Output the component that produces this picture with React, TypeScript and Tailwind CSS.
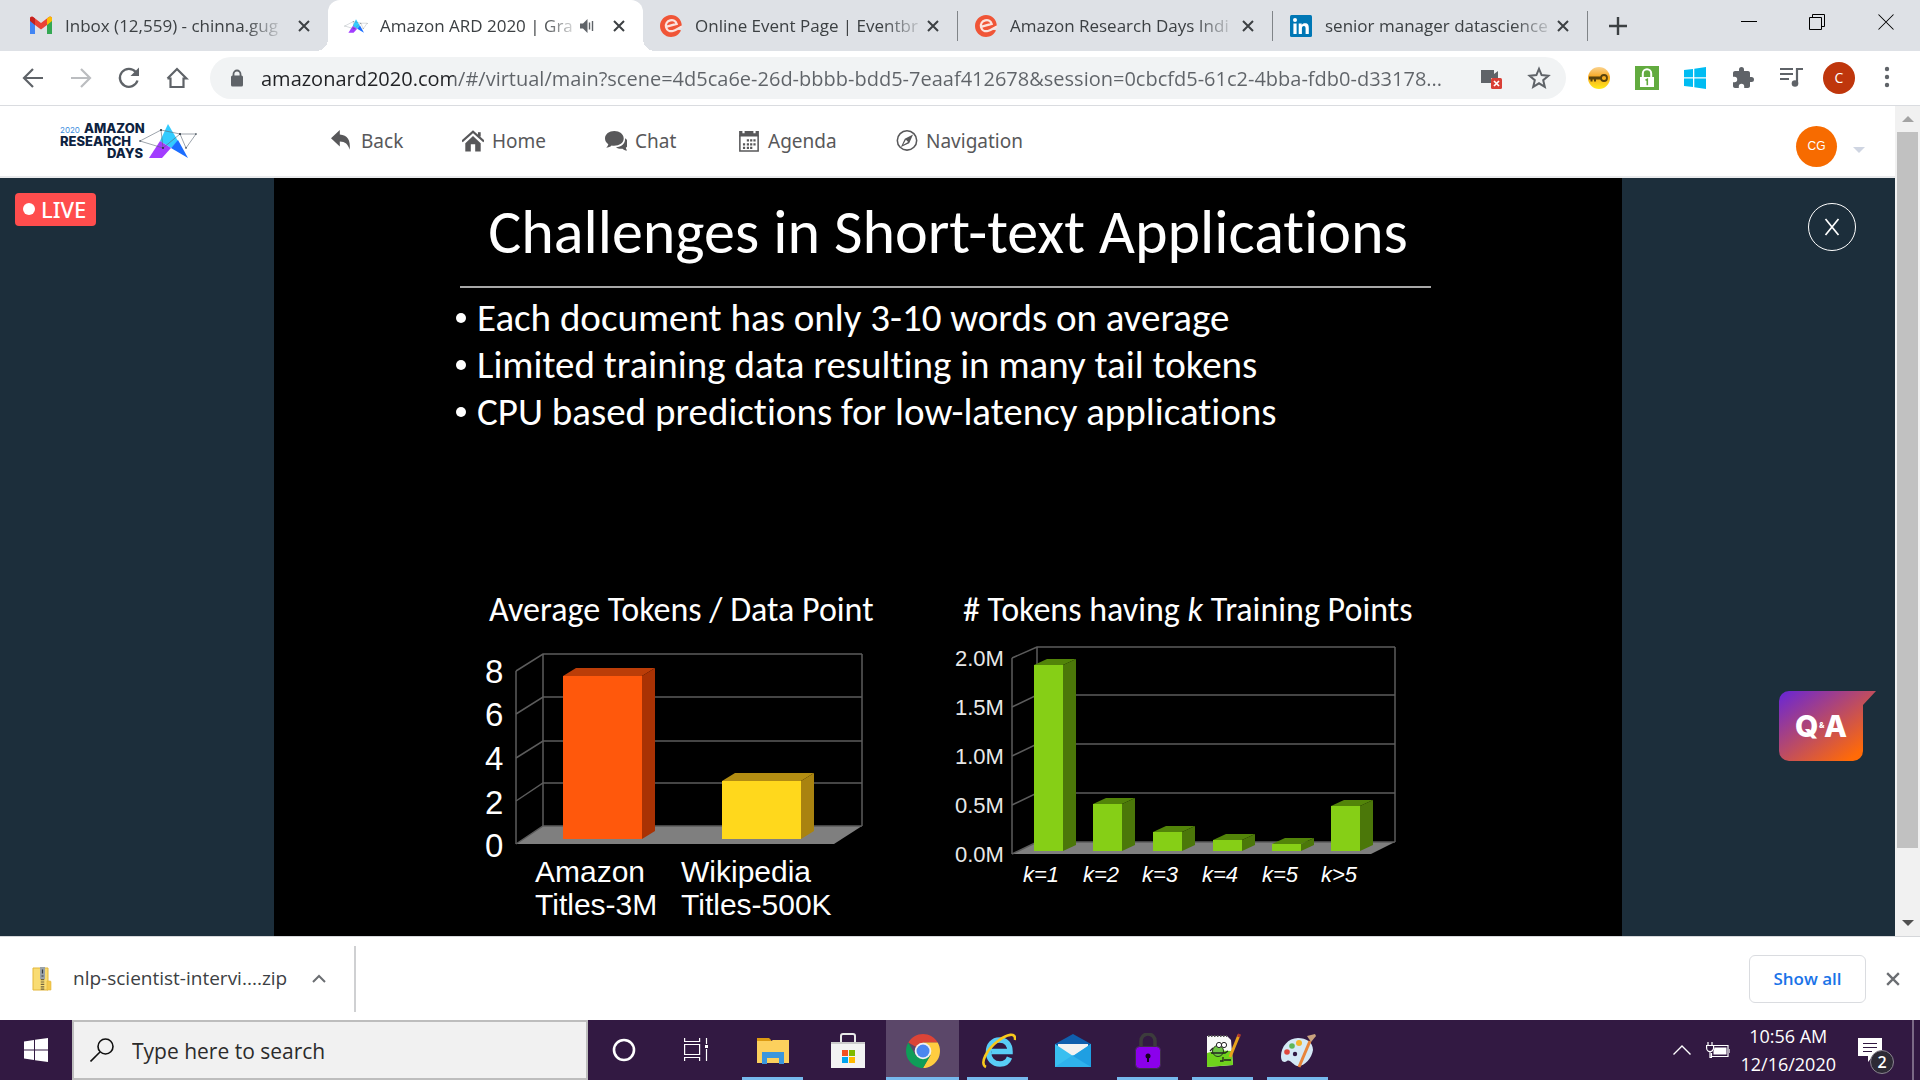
import React from "react";
import type { ReactNode } from "react";

const UI = "font-['Open_Sans','Noto_Sans',sans-serif]";

type TabInfo = {
  title: string;
  icon: ReactNode;
  active?: boolean;
  audible?: boolean;
  divider?: boolean;
};

function GmailIcon() {
  return (
    <svg viewBox="0 0 24 20" className="h-5 w-6">
      <path d="M1 3v15h5V8z" fill="#4285f4" />
      <path d="M23 3v15h-5V8z" fill="#34a853" />
      <path d="M1 4V2.5C1 .6 3 0 4.500 1.200L12 7l7.500-5.800C21 0 23 .6 23 2.500V4l-5 5-6 4.500L6 9z" fill="#ea4335" />
      <path d="M18 2.400 19.500 1.200C21 0 23 .6 23 2.500V5l-5 4z" fill="#fbbc04" />
      <path d="M1 5V2.500C1 .9 2.700.2 4 .9L6 2.400V9z" fill="#c5221f" />
    </svg>
  );
}

function LogoMark() {
  return (
    <g>
      <path d="M168 124 178 141 171 148 160 141Z" fill="#33ccff" />
      <path d="M160 141 149 158H162L171 148Z" fill="#a23cff" />
      <path d="M178 140 188 158 171 148Z" fill="#1a6dff" />
      <path
        d="M140 141 161 130 180 134 196 134 186 148 180 134 163 148ZM161 130 163 148"
        fill="none"
        stroke="#5b6673"
        strokeWidth="0.6"
      />
      <g fill="#26323e">
        <circle cx="161" cy="130" r="1" />
        <circle cx="180" cy="134" r="1" />
        <circle cx="163" cy="148" r="1" />
        <circle cx="196" cy="134" r="0.8" />
        <circle cx="140" cy="141" r="0.8" />
        <circle cx="186" cy="148" r="0.8" />
      </g>
    </g>
  );
}

function EventbriteIcon() {
  return (
    <svg viewBox="0 0 24 24" className="h-6 w-6">
      <path d="M12 1c6 0 10.500 4.500 10.800 10.500L17 15.500l5 .8C20.300 20.600 16.500 23 12 23 5.900 23 1 18 1 12S5.900 1 12 1z" fill="#f05537" />
      <path d="M6.800 12.800 17.600 9.900C16.800 7 14.100 5.600 11.200 6.400 8.200 7.200 6.300 10 7.100 13.200c.8 3 3.600 4.600 6.700 3.800 3-.8 5-2.500 9.200-4.500" fill="none" stroke="#fbe3de" strokeWidth="2.300" />
    </svg>
  );
}

function LinkedinIcon() {
  return (
    <svg viewBox="0 0 22 22" className="h-[22px] w-[22px]">
      <rect width="22" height="22" rx="1.500" fill="#0077b5" />
      <circle cx="5" cy="5" r="2" fill="#fff" />
      <path d="M3.400 8.500h3.200V19H3.400zM8.700 8.500h3v1.400c.6-1 1.800-1.700 3.300-1.700 3.100 0 3.800 2 3.800 4.800v6h-3.200v-5.300c0-1.500-.3-2.700-1.700-2.700-1.500 0-2 1.100-2 2.600V19H8.700z" fill="#fff" />
    </svg>
  );
}

function Cross({ className }: { className: string }) {
  return (
    <svg viewBox="0 0 12 12" className={className} fill="none" stroke="currentColor">
      <path d="M1 1 11 11M11 1 1 11" />
    </svg>
  );
}

const tabs: TabInfo[] = [
  { title: "Inbox (12,559) - chinna.gug", icon: <GmailIcon /> },
  {
    title: "Amazon ARD 2020 | Gra",
    icon: (
      <svg viewBox="138 122 60 38" className="h-6 w-6 overflow-visible">
        <LogoMark />
      </svg>
    ),
    active: true,
    audible: true,
  },
  { title: "Online Event Page | Eventbr", icon: <EventbriteIcon />, divider: true },
  { title: "Amazon Research Days Indi", icon: <EventbriteIcon />, divider: true },
  { title: "senior manager datascience", icon: <LinkedinIcon />, divider: true },
];

function Tab({ tab }: { tab: TabInfo }) {
  return (
    <div
      className={
        tab.active
          ? "relative flex h-full w-[315px] items-center rounded-t-xl bg-white pl-4 pr-3 before:absolute before:-left-3 before:bottom-0 before:h-3 before:w-3 before:bg-[radial-gradient(circle_at_0_0,transparent_12px,white_12px)] after:absolute after:-right-3 after:bottom-0 after:h-3 after:w-3 after:bg-[radial-gradient(circle_at_100%_0,transparent_12px,white_12px)]"
          : "flex h-full w-[315px] items-center pl-4 pr-3"
      }
    >
      <button className="flex min-w-0 flex-1 items-center gap-3 text-left">
        <span className="flex w-6 shrink-0 justify-center">{tab.icon}</span>
        <span className="min-w-0 flex-1 whitespace-nowrap text-[17px] leading-6 text-[#3c4043]">
          <span className="inline-block [mask-image:linear-gradient(to_right,black_84%,transparent_104%)]">{tab.title}</span>
        </span>
      </button>
      {tab.audible && (
        <svg viewBox="0 0 16 16" className="ml-2 mr-2 h-4 w-4 shrink-0 text-[#5f6368]" fill="currentColor">
          <path d="M1 5.500h3L8.500 1v14L4 10.500H1z" />
          <path d="M10.500 4.500v7M13.500 3v10" stroke="currentColor" strokeWidth="1.400" />
        </svg>
      )}
      <button aria-label="Close tab" className="ml-1 flex w-6 shrink-0 justify-center text-[#3c4043]">
        <Cross className="h-3 w-3 stroke-2" />
      </button>
      {tab.divider && <span className="-mr-3 ml-3 h-[30px] w-px bg-[#808488]" />}
    </div>
  );
}

function TabStrip() {
  return (
    <div className="flex h-[51px] items-center bg-[#dee1e6] pl-[13px]">
      {tabs.map((t) => (
        <Tab key={t.title} tab={t} />
      ))}
      <button aria-label="New tab" className="ml-[18px] flex w-6 justify-center text-[#3c4043]">
        <svg viewBox="0 0 18 18" className="h-[18px] w-[18px]" fill="none" stroke="currentColor" strokeWidth="2.400">
          <path d="M9 0v18M0 9h18" />
        </svg>
      </button>
      <div className="ml-auto flex items-center gap-[52px] pb-2 pr-[25px]">
        <button aria-label="Minimize">
          <svg viewBox="0 0 16 16" className="h-4 w-4" stroke="#000"><path d="M0 7.500h16" /></svg>
        </button>
        <button aria-label="Restore">
          <svg viewBox="0 0 16 16" className="h-4 w-4" fill="none" stroke="#000"><path d="M.5 3.500h12v12H.5zM3.500 3.500v-3h12v12h-3" /></svg>
        </button>
        <button aria-label="Close window">
          <Cross className="h-[18px] w-[18px] stroke-[0.700]" />
        </button>
      </div>
    </div>
  );
}

function Toolbar() {
  return (
    <div className="flex h-[55px] items-center border-b border-[#dadce0] bg-white pl-[21px] pr-[21px] text-[#5f6368]">
      <div className="flex w-[189px] shrink-0 items-center gap-6">
        <button aria-label="Back">
          <svg viewBox="0 0 24 24" className="h-6 w-6" fill="none" stroke="currentColor" strokeWidth="2.200"><path d="M22 12H4M12 3l-9 9 9 9" /></svg>
        </button>
        <button aria-label="Forward" className="text-[#bbbdc0]">
          <svg viewBox="0 0 24 24" className="h-6 w-6" fill="none" stroke="currentColor" strokeWidth="2.200"><path d="M2 12h18M12 3l9 9-9 9" /></svg>
        </button>
        <button aria-label="Reload">
          <svg viewBox="0 0 24 24" className="h-6 w-6" fill="none" stroke="currentColor" strokeWidth="2.300"><path d="M20.500 14.500A9 9 0 1 1 18.800 6" /><path d="M22 1.500V10h-8.500z" fill="currentColor" stroke="none" /></svg>
        </button>
        <button aria-label="Home">
          <svg viewBox="0 0 24 24" className="h-6 w-6" fill="none" stroke="currentColor" strokeWidth="2.200"><path d="M5.500 11.500V21h13v-9.500M2.500 12.500 12 3l9.500 9.500h-3M2.500 12.500h3" /></svg>
        </button>
      </div>
      <div className="flex h-[42px] min-w-0 flex-1 items-center rounded-full bg-[#f1f3f4] pl-5 pr-[15px]">
        <svg viewBox="0 0 14 18" className="h-[18px] w-3.5 shrink-0" fill="none"><path d="M3.500 8V5a3.500 3.500 0 0 1 7 0v3" stroke="#5f6368" strokeWidth="1.800" /><rect x="1" y="6.500" width="12" height="11" rx="1.500" fill="#5f6368" /></svg>
        <input
          aria-label="Address"
          readOnly
          value="amazonard2020.com/#/virtual/main?scene=4d5ca6e-26d-bbbb-bdd5-7eaaf412678&session=0cbcfd5-61c2-4bba-fdb0-d33178..."
          className="ml-[17px] h-8 min-w-0 flex-1 bg-[linear-gradient(to_right,#202124_193px,#5f6368_193px)] bg-clip-text text-[20px] text-transparent outline-none"
        />
        <button aria-label="Camera blocked" className="ml-4">
          <svg viewBox="0 0 24 24" className="h-6 w-6">
            <path d="M2 4h13v4l4-3v7H12v5H2z" fill="#5f6368" />
            <rect x="12" y="12" width="11" height="11" rx="1.500" fill="#d93f36" />
            <path d="m15 15 5 5m0-5-5 5" stroke="#fff" strokeWidth="1.700" />
          </svg>
        </button>
        <button aria-label="Bookmark" className="ml-6">
          <svg viewBox="0 0 24 24" className="h-6 w-6" fill="none" stroke="#5f6368" strokeWidth="2"><path d="m12 2.800 2.600 6.300 6.800.6-5.200 4.500 1.600 6.700L12 17.300l-5.800 3.600 1.600-6.700-5.200-4.500 6.800-.6z" /></svg>
        </button>
      </div>
      <div className="ml-[21px] flex shrink-0 items-center gap-6">
        <button aria-label="Password extension">
          <svg viewBox="0 0 24 24" className="h-6 w-6">
            <defs><linearGradient id="keyg" x1="0" y1="0" x2="0" y2="1"><stop offset="0" stopColor="#fbd38e" /><stop offset=".45" stopColor="#f6a821" /><stop offset="1" stopColor="#ffec1a" /></linearGradient></defs>
            <circle cx="12" cy="12" r="11" fill="url(#keyg)" />
            <path d="M2 10.500h13v3H9v2H7v-2H5.500v2H3.500v-2H2z" fill="#59430d" />
            <circle cx="17" cy="12" r="3" fill="none" stroke="#59430d" strokeWidth="1.800" />
          </svg>
        </button>
        <button aria-label="Lock extension">
          <svg viewBox="0 0 24 24" className="h-6 w-6">
            <rect width="24" height="24" fill="#62ab3f" />
            <path d="M7.800 12V7.500a4.200 4.200 0 0 1 8.400 0V12" fill="none" stroke="#fff" strokeWidth="2" />
            <rect x="5" y="11" width="14" height="10" fill="#fff" />
            <path d="M10.500 14.300l1.800-1v6" fill="none" stroke="#62ab3f" strokeWidth="1.600" />
          </svg>
        </button>
        <button aria-label="Windows extension">
          <svg viewBox="0 0 24 24" className="h-6 w-6" fill="#00bcf2"><path d="M1 4l9-1v8.300H1zM11.300 2.800 23 1v10.300H11.300zM1 12.600h9V21l-9-1zM11.300 12.600H23V23l-11.700-1.800z" /></svg>
        </button>
        <button aria-label="Extensions">
          <svg viewBox="0 0 24 24" className="h-6 w-6" fill="#5f6368"><path d="M20.500 11H19V7c0-1.100-.9-2-2-2h-4V3.500a2.500 2.500 0 0 0-5 0V5H4c-1.100 0-2 .9-2 2v3.800h1.500a2.700 2.700 0 0 1 0 5.400H2V20c0 1.100.9 2 2 2h3.800v-1.500a2.700 2.700 0 0 1 5.400 0V22H17c1.100 0 2-.9 2-2v-4h1.500a2.500 2.500 0 0 0 0-5z" /></svg>
        </button>
        <button aria-label="Media controls">
          <svg viewBox="0 0 24 24" className="h-6 w-6" fill="none" stroke="#5f6368" strokeWidth="2.200"><path d="M1 3h13M1 8h13M1 13h9M18 17V3h6" /><circle cx="16" cy="17.500" r="3.300" fill="#5f6368" stroke="none" /></svg>
        </button>
        <button className="-mx-1 h-8 w-8 rounded-full bg-[#bf360c] text-sm leading-8 text-white">C</button>
        <button aria-label="Menu">
          <svg viewBox="0 0 24 24" className="h-6 w-6" fill="#5f6368"><circle cx="12" cy="3" r="2.200" /><circle cx="12" cy="11" r="2.200" /><circle cx="12" cy="19" r="2.200" /></svg>
        </button>
      </div>
    </div>
  );
}

const nav: { label: string; icon: ReactNode; width: string }[] = [
  {
    label: "Back",
    width: "w-[131px]",
    icon: <path d="M8 0v4c7 .5 10 5 9 14-1.500-5-4-7.500-9-7.500V15L0 7.500z" />,
  },
  {
    label: "Home",
    width: "w-[143px]",
    icon: (
      <>
        <path d="M10 5.500 3 12v7.500h5V13h4v6.500h5V12z" />
        <path d="M0 10.500 10 1.500l10 9" fill="none" stroke="currentColor" strokeWidth="2" />
        <path d="M14.500 2H17v4h-2.500z" />
      </>
    ),
  },
  {
    label: "Chat",
    width: "w-[133px]",
    icon: (
      <>
        <path d="M8.500 1C3.800 1 0 3.900 0 7.700c0 2.100 1.200 4 3 5.200-.3 1.300-1 2.300-2 3.100 2 0 3.800-.7 5-1.900 6 .9 11-1.900 11-6.400C17 3.900 13.200 1 8.500 1z" />
        <path d="M18.200 7.500c.5 4.300-2.700 7.700-8.200 8.200 1.500 1.200 3.800 1.600 6 1.300 1 1 2.500 1.700 4.500 1.700-1-.7-1.500-1.500-1.600-2.500 3.100-2.100 3-6.500-.7-8.700z" />
      </>
    ),
  },
  {
    label: "Agenda",
    width: "w-[158px]",
    icon: (
      <>
        <path d="M1 1h3v2h2V1h8v2h2V1h3v5H1z" />
        <path d="M1.700 5v14h16.600V5" fill="none" stroke="currentColor" strokeWidth="1.400" />
        <path d="M8 8.500h2v2H8zM11 8.500h2v2h-2zM14 8.500h2v2h-2zM4.500 12h2v2h-2zM8 12h2v2H8zM11 12h2v2h-2zM14 12h2v2h-2zM4.500 15.300h2v2h-2zM8 15.300h2v2H8zM11 15.300h2v2h-2z" />
      </>
    ),
  },
  {
    label: "Navigation",
    width: "w-[130px]",
    icon: (
      <>
        <circle cx="10" cy="9.500" r="8.800" fill="none" stroke="currentColor" strokeWidth="1.400" />
        <path fillRule="evenodd" d="M15.500 4 12 12l-7.500 3.500L8 8zM9 8.800l2 2-4.500 2.600z" />
      </>
    ),
  },
];

function SiteHeader() {
  return (
    <header className="flex h-[72px] shrink-0 items-center border-b-2 border-[#e9eaec] bg-white pl-[58px] font-['Noto_Sans','Open_Sans',sans-serif] text-[#58585a]">
      <a href="#home" aria-label="2020 Amazon Research Days" className="w-[273px] shrink-0">
        <svg viewBox="58 120 140 42" className="h-[42px] w-[140px]">
          <g fontFamily="Inter, sans-serif" fontWeight="800" fontSize="13" fill="#0d2240">
            <text x="84" y="133">AMAZON</text>
            <text x="60" y="146">RESEARCH</text>
            <text x="107" y="158">DAYS</text>
            <text x="60" y="133" fontSize="8" fontWeight="400" fill="#3b8ede">2020</text>
          </g>
          <LogoMark />
        </svg>
      </a>
      <nav className="flex text-[19px] leading-6">
        {nav.map((n) => (
          <a key={n.label} href={"#" + n.label.toLowerCase()} className={n.width + " flex items-center gap-2"}>
            <svg viewBox="0 0 20 20" className="h-[22px] w-[22px] shrink-0" fill="currentColor">
              {n.icon}
            </svg>
            {n.label}
          </a>
        ))}
      </nav>
      <button className="ml-auto mr-[30px] mt-2.5 flex items-center gap-4" aria-label="Account">
        <span className="h-[41px] w-[41px] rounded-full bg-[#f76b00] text-center font-['Liberation_Sans',sans-serif] text-[12px] leading-[41px] text-white">CG</span>
        <svg viewBox="0 0 12 6" className="mt-2 h-1.5 w-3" fill="#cfd5e2"><path d="M0 0h12L6 6z" /></svg>
      </button>
    </header>
  );
}

function Bar3D(p: { x: number; top: number; base: number; w: number; dx: number; dy: number; front: string; side: string; cap: string }) {
  const { x, top, base, w, dx, dy } = p;
  return (
    <g>
      <polygon fill={p.cap} points={`${x},${top} ${x + dx},${top - dy} ${x + w + dx},${top - dy} ${x + w},${top}`} />
      <polygon fill={p.side} points={`${x + w},${top} ${x + w + dx},${top - dy} ${x + w + dx},${base - dy} ${x + w},${base}`} />
      <rect x={x} y={top} width={w} height={base - top} fill={p.front} />
    </g>
  );
}

function Frame({ fx, bx, rx, fr, front, back }: { fx: number; bx: number; rx: number; fr: number; front: number[]; back: number[] }) {
  const n = front.length - 1;
  return (
    <g>
      <polygon points={`${fx},${front[n]} ${bx},${back[n]} ${rx},${back[n]} ${fr},${front[n]}`} fill="#7f7f7f" />
      <g fill="none" stroke="#5c5c5c" strokeWidth="1.500">
        {front.map((y, i) => (
          <polyline key={y} points={`${fx},${y} ${bx},${back[i]} ${rx},${back[i]}`} />
        ))}
        <path d={`M${fx} ${front[0]}V${front[n]}M${bx} ${back[0]}V${back[n]}M${rx} ${back[0]}V${back[n]}`} />
      </g>
    </g>
  );
}

function TokensChart() {
  const front = [671, 714, 758, 801, 844];
  const back = [654, 697, 741, 783, 826];
  return (
    <svg viewBox="480 644 400 285" className="mt-4 block h-[285px] w-[400px]" role="img" aria-label="Average tokens per data point">
      <Frame fx={516} bx={543} rx={862} fr={834} front={front} back={back} />
      <Bar3D x={563} top={676} base={839} w={79} dx={13} dy={8} front="#ff580c" side="#a93204" cap="#bb3d08" />
      <Bar3D x={722} top={781} base={839} w={79} dx={13} dy={8} front="#ffd81c" side="#a98310" cap="#b38d12" />
      <g fill="#fff" fontFamily="'Liberation Sans', Arial, sans-serif">
        <g fontSize="33">
          {["8", "6", "4", "2", "0"].map((t, i) => (
            <text key={t} x="485" y={[683, 726, 770, 814, 857][i]}>{t}</text>
          ))}
        </g>
        <g fontSize="30">
          <text x="535" y="882">Amazon</text>
          <text x="535" y="915">Titles-3M</text>
          <text x="681" y="882">Wikipedia</text>
          <text x="681" y="915">Titles-500K</text>
        </g>
      </g>
    </svg>
  );
}

function TrainingChart() {
  const front = [658, 707, 756, 805, 854];
  const back = [647, 695, 744, 793, 842];
  const tops = [665, 804, 832, 840, 844, 806];
  return (
    <svg viewBox="950 644 460 285" className="mt-4 block h-[285px] w-[460px]" role="img" aria-label="Number of tokens having k training points">
      <Frame fx={1012} bx={1037} rx={1395} fr={1371} front={front} back={back} />
      {tops.map((t, i) => (
        <Bar3D key={i} x={[1034, 1093, 1153, 1213, 1272, 1331][i]} top={t} base={851} w={29} dx={13} dy={6} front="#86cf16" side="#4b7709" cap="#528409" />
      ))}
      <g fill="#e8e8e8" fontFamily="'Liberation Sans', Arial, sans-serif" fontSize="22">
        {["2.0M", "1.5M", "1.0M", "0.5M", "0.0M"].map((t, i) => (
          <text key={t} x="955" y={[666, 715, 764, 813, 862][i]}>{t}</text>
        ))}
        <g fontStyle="italic" fill="#fff">
          {["k=1", "k=2", "k=3", "k=4", "k=5", "k>5"].map((t, i) => (
            <text key={t} x={[1023, 1083, 1142, 1202, 1262, 1321][i]} y="882">{t}</text>
          ))}
        </g>
      </g>
    </svg>
  );
}

function Slide() {
  return (
    <article className="min-h-0 overflow-hidden bg-black pt-4 font-['Carlito','Lato',sans-serif] text-white [font-variant-ligatures:none]">
      <h1 className="text-center text-[62px] leading-[76px]">Challenges in Short-text Applications</h1>
      <hr className="ml-[186px] mt-4 w-[72%] border-t-2 border-[#a8a8a8]" />
      <ul className="ml-[182px] mt-1.5 text-[39px] leading-[47px]">
        {[
          "Each document has only 3-10 words on average",
          "Limited training data resulting in many tail tokens",
          "CPU based predictions for low-latency applications",
        ].map((t) => (
          <li key={t} className="flex items-center gap-[11px] whitespace-nowrap">
            <span className="h-2.5 w-2.5 rounded-full bg-white" />
            {t}
          </li>
        ))}
      </ul>
      <div className="ml-[206px] mt-[157px] flex gap-[70px] text-[34px] leading-9">
        <figure className="w-[400px]">
          <figcaption className="ml-[9px] whitespace-nowrap">Average Tokens / Data Point</figcaption>
          <TokensChart />
        </figure>
        <figure>
          <figcaption className="ml-[13px] whitespace-nowrap"># Tokens having <i>k</i> Training Points</figcaption>
          <TrainingChart />
        </figure>
      </div>
    </article>
  );
}

function Stage() {
  return (
    <main className="grid min-h-0 flex-1 grid-cols-[274fr_1348fr_273fr] bg-[#1c2e3b]">
      <div className="min-w-0">
        <span className="ml-[15px] mt-[15px] inline-flex h-[33px] w-[81px] items-center gap-1.5 rounded bg-[#ff4d4d] pb-0.5 pl-2 font-['Noto_Sans',sans-serif] text-[22px] font-medium leading-none text-white">
          <span className="h-3 w-3 rounded-full bg-white" />
          LIVE
        </span>
      </div>
      <Slide />
      <div className="flex min-w-0 flex-col items-end">
        <button aria-label="Close stream" className="mr-[39px] mt-[25px] flex h-12 w-12 items-center justify-center rounded-full border border-white text-white">
          <svg viewBox="0 0 16 18" className="h-[18px] w-4" fill="none" stroke="currentColor" strokeWidth="1.700"><path d="M1.500 1 14.500 17M14.500 1 1.500 17" /></svg>
        </button>
        <button className="mr-[19px] mt-[440px]" aria-label="Q&A">
          <svg viewBox="0 0 97 70" className="h-[70px] w-[97px]">
            <defs>
              <linearGradient id="qa" x1="0" y1="0" x2="1" y2="1">
                <stop offset="0.05" stopColor="#7029cc" />
                <stop offset="0.85" stopColor="#ff6a08" />
              </linearGradient>
            </defs>
            <path d="M10 0H97L84 14V60a10 10 0 0 1-10 10H10A10 10 0 0 1 0 60V10A10 10 0 0 1 10 0z" fill="url(#qa)" />
            <g fill="#fff" fontFamily="Inter, sans-serif" fontWeight="800">
              <text x="16" y="46" fontSize="30">Q</text>
              <text x="40" y="37" fontSize="8">&amp;</text>
              <text x="45" y="46" fontSize="30">A</text>
            </g>
          </svg>
        </button>
      </div>
    </main>
  );
}

function Scrollbar() {
  return (
    <div className="flex w-[25px] shrink-0 flex-col items-center bg-[#f1f1f1]">
      <svg viewBox="0 0 12 6" className="my-[10px] h-1.5 w-3" fill="#a3a3a3"><path d="M6 0l6 6H0z" /></svg>
      <div className="w-[21px] flex-[718] bg-[#c1c1c1]" />
      <div className="flex-[62]" />
      <svg viewBox="0 0 12 6" className="my-[10px] h-1.5 w-3" fill="#505050"><path d="M0 0h12L6 6z" /></svg>
    </div>
  );
}

function DownloadBar() {
  return (
    <div className="flex h-[84px] shrink-0 items-center border-t border-[#d5d7da] bg-white pr-5">
      <button className="flex items-center pl-8 text-[19px] text-[#3c4043]">
        <svg viewBox="0 0 20 24" className="mr-[21px] h-6 w-5">
          <path d="M1 1h15v22H1z" fill="#f9dc73" stroke="#e3b63b" />
          <path d="M15 14h3a1 1 0 0 1 1 1v8h-4z" fill="#f4c94d" stroke="#e3b63b" strokeWidth="0.600" />
          <path d="M8 0h5v12H8z" fill="#9aa2a8" />
          <path d="M10.500 2.500v4M9.500 9h2" stroke="#33393e" strokeWidth="1.200" />
          <path d="M10.500 12v12" stroke="#6f6240" strokeWidth="3.500" strokeDasharray="1.200 1.200" />
        </svg>
        nlp-scientist-intervi....zip
      </button>
      <button aria-label="Download options" className="ml-[25px]">
        <svg viewBox="0 0 14 9" className="h-[9px] w-3.5" fill="none" stroke="#6b6e72" strokeWidth="2"><path d="M1 8l6-6 6 6" /></svg>
      </button>
      <div className="ml-7 h-[66px] w-0.5 bg-[#cfd0d2]" />
      <button className="ml-auto h-12 w-[117px] rounded-md border border-[#dadce0] text-[17px] font-semibold text-[#1a73e8]">Show all</button>
      <button aria-label="Close downloads" className="ml-5 text-[#6b6e72]">
        <Cross className="h-3.5 w-3.5 stroke-2" />
      </button>
    </div>
  );
}

const apps: { name: string; state: "idle" | "open" | "active"; icon: ReactNode }[] = [
  {
    name: "File Explorer",
    state: "open",
    icon: (
      <>
        <path d="M2 5h12l2 2v4H2z" fill="#dc9a12" />
        <path d="M2 8h14l2-1h16v23H2z" fill="#fcd05d" />
        <path d="M7 31V19h22v12h-5v-6H12v6z" fill="#3a96dd" />
      </>
    ),
  },
  {
    name: "Microsoft Store",
    state: "idle",
    icon: (
      <>
        <path d="M11 10V3a2 2 0 0 1 2-2h10a2 2 0 0 1 2 2v7" fill="none" stroke="#e8e8e8" strokeWidth="2" />
        <path d="M1 9h34v26H1z" fill="#f3f3f3" />
        <path d="M1 9h34v2H1z" fill="#ccc" />
        <path d="M12 17h6v6h-6z" fill="#f25022" />
        <path d="M19 17h6v6h-6z" fill="#7fba00" />
        <path d="M12 24h6v6h-6z" fill="#00a4ef" />
        <path d="M19 24h6v6h-6z" fill="#ffb900" />
      </>
    ),
  },
  {
    name: "Google Chrome",
    state: "active",
    icon: (
      <>
        <path d="M18 18 3.300 9.500A17 17 0 0 1 32.700 9.500H18z" fill="#db4437" />
        <path d="M18 9.500h14.700A17 17 0 0 1 18 35l7.400-12.700z" fill="#ffcd40" />
        <path d="M3.300 9.500A17 17 0 0 0 18 35l7.400-12.800-14.800 0z" fill="#0f9d58" />
        <circle cx="18" cy="18" r="8.300" fill="#f1f1f1" />
        <circle cx="18" cy="18" r="6.500" fill="#4a87f0" />
      </>
    ),
  },
  {
    name: "Internet Explorer",
    state: "open",
    icon: (
      <>
        <path d="M11.500 18.500H30C30 11.500 26 7 19.500 7S8.500 12 8.500 19 13 31 20 31c5 0 8-2.500 9.500-6.500" fill="none" stroke="#59cdf6" strokeWidth="5.500" />
        <path d="M6 34c-7-3 1-18 12-26 9-7 18-9 17-1" fill="none" stroke="#f8c81c" strokeWidth="2.600" />
      </>
    ),
  },
  {
    name: "Mail",
    state: "idle",
    icon: (
      <>
        <path d="M0 11 18 1l18 10v12H0z" fill="#0f5fae" />
        <path d="M3 11h30v12H3z" fill="#f2f2f2" />
        <path d="M0 11l18 12 18-12v23H0z" fill="#39bff0" />
        <path d="M0 34h36L18 22z" fill="#2fb2ec" />
        <path d="M18 23 36 11v23z" fill="#1f9fe2" />
      </>
    ),
  },
  {
    name: "Lock",
    state: "open",
    icon: (
      <>
        <path d="M11 14V8a7 7 0 0 1 14 0v6" fill="none" stroke="#3c3c3c" strokeWidth="3.500" />
        <rect x="5.500" y="13.500" width="25" height="22" rx="4" fill="#8b00ec" stroke="#3f2f4a" />
        <circle cx="18" cy="23" r="2.500" fill="#14001f" />
        <path d="M17 23h2v6h-2z" fill="#14001f" />
      </>
    ),
  },
  {
    name: "Notepad++",
    state: "open",
    icon: (
      <>
        <path d="M2 3h20l4 4 2 25-26 2z" fill="#f7f9f7" />
        <path d="M2 20c7-3 15-3 25-2l1 14-26 2z" fill="#6fd21c" />
        <path d="M3 3h19" stroke="#555" strokeWidth="2" strokeDasharray="1.500 1.500" />
        <circle cx="13" cy="18" r="5.500" fill="#6dc443" stroke="#283d16" />
        <circle cx="14" cy="12" r="2.600" fill="#fff" stroke="#222" />
        <circle cx="19" cy="12" r="2.600" fill="#fff" stroke="#222" />
        <path d="M6 20h14l3-2M8 15l-3 3M15 28h3v-4M19 27h7" fill="none" stroke="#222" strokeWidth="1.300" />
        <path d="M34 2 25 24" stroke="#e8a41c" strokeWidth="3" />
        <path d="M34.500 1 33.500 4" stroke="#b0362c" strokeWidth="3" />
      </>
    ),
  },
  {
    name: "Paint",
    state: "open",
    icon: (
      <>
        <path d="M18 5C8 5 1 14 1 23c0 6 3 7 6 5s6 4 10 5c7 1 15-8 16-16C33 9 26 5 18 5z" fill="#d5e9f5" />
        <circle cx="7" cy="19" r="2.800" fill="#e0483c" />
        <circle cx="12" cy="13" r="2.800" fill="#5fb658" />
        <circle cx="19" cy="10" r="3" fill="#f5b52c" />
        <circle cx="15" cy="21" r="2.200" fill="#321a43" />
        <path d="M30 8 19 34" stroke="#e8853a" strokeWidth="3" />
        <path d="M27 3l8-2 1 2-5 6z" fill="#c9a27e" />
      </>
    ),
  },
];

function Taskbar() {
  return (
    <footer className="flex h-[60px] shrink-0 bg-[#321942] text-white">
      <button aria-label="Start" className="flex w-[72px] items-center justify-center">
        <svg viewBox="0 0 24 24" className="h-6 w-6" fill="#fff"><path d="M0 3.500 10 2v9.500H0zM11 1.800 24 0v11.500H11zM0 12.500h10V22L0 20.500zM11 12.500h13V24l-13-1.800z" /></svg>
      </button>
      <label className="flex w-[516px] items-center border-2 border-[#bdbdbd] bg-[#f1f1f1] pl-4">
        <svg viewBox="0 0 24 24" className="h-6 w-6 shrink-0" fill="none" stroke="#111" strokeWidth="1.600"><circle cx="15.500" cy="8.500" r="7.500" /><path d="M10 14 .5 23.500" /></svg>
        <input placeholder="Type here to search" aria-label="Type here to search" className="ml-[18px] mt-1 min-w-0 flex-1 bg-transparent text-[21px] outline-none placeholder:text-[#2b2b2b]" />
      </label>
      <button aria-label="Cortana" className="flex w-[72px] items-center justify-center">
        <svg viewBox="0 0 24 24" className="h-6 w-6" fill="none" stroke="#fff" strokeWidth="2.600"><circle cx="12" cy="12" r="10" /></svg>
      </button>
      <button aria-label="Task View" className="flex w-[72px] items-center justify-center">
        <svg viewBox="0 0 24 24" className="h-6 w-6" fill="none" stroke="#fff" strokeWidth="1.200"><path d="M.6 0v3.500h15V0M.6 6.500h15v10H.6zM.6 23v-3.500h15V23M22.500 0v6M22.500 11v12" /><path d="M21 7h3v3h-3z" fill="#fff" stroke="none" /></svg>
      </button>
      <div className="ml-1 flex gap-0.5">
        {apps.map((a) => (
          <button
            key={a.name}
            aria-label={a.name}
            className={
              a.state === "active"
                ? "flex w-[73px] flex-col items-center bg-[#5b4769]"
                : "flex w-[73px] flex-col items-center"
            }
          >
            <span className="flex flex-1 items-center pt-1">
              <svg viewBox="0 0 36 36" className="h-9 w-9">{a.icon}</svg>
            </span>
            <span
              className={
                a.state === "active"
                  ? "h-[3px] w-full bg-[#76b9ed]"
                  : a.state === "open"
                    ? "h-[3px] w-[61px] bg-[#76b9ed]"
                    : "h-[3px] w-[61px]"
              }
            />
          </button>
        ))}
      </div>
      <div className="ml-auto flex items-center">
        <button aria-label="Show hidden icons">
          <svg viewBox="0 0 18 10" className="h-[10px] w-[18px]" fill="none" stroke="#fff" strokeWidth="1.400"><path d="M.5 9.500 9 1l8.500 8.500" /></svg>
        </button>
        <button aria-label="Battery" className="ml-[15px]">
          <svg viewBox="0 0 24 18" className="h-[18px] w-6" fill="none" stroke="#fff" strokeWidth="1.200"><path d="M7 4.500h15v11H5.500V12M24 8v4M2 1v3M6 1v3M.6 4.500h7V7a3.500 3.500 0 0 1-7 0zM4 10.500v6h2" /><path d="M8.500 6.500h12v7h-13v-3z" fill="#fff" stroke="none" /></svg>
        </button>
        <button className="ml-[10px] flex flex-col items-center text-[18px] leading-7">
          <span>10:56 AM</span>
          <span>12/16/2020</span>
        </button>
        <button aria-label="2 notifications" className="relative ml-[22px] h-6 w-6">
          <svg viewBox="0 0 24 24" className="h-6 w-6"><path d="M0 0h24v18H15l-5 6v-6H0z" fill="#fff" /><path d="M5 5.500h14M5 9.500h14M5 13.500h9" stroke="#321942" strokeWidth="1.200" /></svg>
          <span className="absolute left-3 top-3 h-6 w-6 rounded-full border border-[#8b8591] bg-[#2d2a35] text-center text-base font-semibold leading-[22px]">2</span>
        </button>
        <div className="ml-[30px] h-full w-2 border-l-2 border-[#7b6a86]" />
      </div>
    </footer>
  );
}

export default function App() {
  return (
    <div className={UI + " flex h-screen min-h-[1080px] flex-col overflow-hidden bg-white"}>
      <TabStrip />
      <Toolbar />
      <div className="flex min-h-0 flex-1">
        <div className="flex min-w-0 flex-1 flex-col">
          <SiteHeader />
          <Stage />
        </div>
        <Scrollbar />
      </div>
      <DownloadBar />
      <Taskbar />
    </div>
  );
}
